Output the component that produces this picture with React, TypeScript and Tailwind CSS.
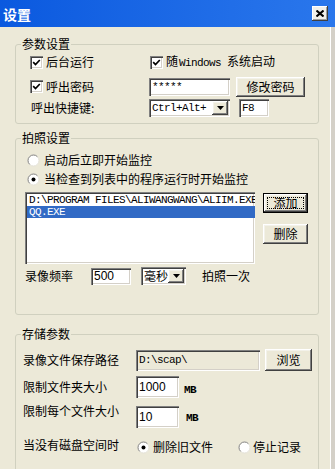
import React from "react";

const raised =
  "bg-[#ece9d8] shadow-[inset_-1px_-1px_0_#404040,inset_1px_1px_0_#ffffff,inset_-2px_-2px_0_#808080,inset_2px_2px_0_#f3f2ea]";
const sunken =
  "bg-white shadow-[inset_1px_1px_0_#808080,inset_2px_2px_0_#404040,inset_-1px_-1px_0_#ffffff,inset_-2px_-2px_0_#d4d0c8]";
const sunkenGray =
  "bg-[#ece9d8] shadow-[inset_1px_1px_0_#808080,inset_2px_2px_0_#404040,inset_-1px_-1px_0_#ffffff,inset_-2px_-2px_0_#d4d0c8]";
const mono = "font-['Liberation_Mono',monospace] text-[11px] tracking-[-0.6px]";
const digits = "font-['Liberation_Sans',Arial,sans-serif] text-[12px]";

function Check() {
  return (
    <span className={`w-[13px] h-[13px] shrink-0 flex items-center justify-center ${sunken}`}>
      <svg width="9" height="9" viewBox="0 0 9 9">
        <path d="M1.2 4.2 L3.5 6.6 L7.8 2" stroke="#000" strokeWidth="1.7" fill="none" />
      </svg>
    </span>
  );
}

function Radio({ on }: { on?: boolean }) {
  return (
    <svg width="13" height="13" viewBox="0 0 13 13" className="shrink-0">
      <circle cx="6.5" cy="6.5" r="5.5" fill="#fff" stroke="#e4e2d8" strokeWidth="1" />
      <path d="M2.61 10.39 A5.5 5.5 0 0 1 10.39 2.61" stroke="#8a8a8a" strokeWidth="1" fill="none" />
      {on && <circle cx="6.5" cy="6.5" r="2" fill="#000" />}
    </svg>
  );
}

function Arrow() {
  return (
    <div className={`w-[16px] self-stretch shrink-0 flex items-center justify-center ${raised}`}>
      <svg width="7" height="4" viewBox="0 0 7 4">
        <path d="M0 0H7L3.5 4Z" fill="#000" />
      </svg>
    </div>
  );
}

function Legend({ children }: { children: React.ReactNode }) {
  return <legend className="ml-[5px] px-[1px] leading-[16px]">{children}</legend>;
}

export default function App() {
  return (
    <div className="w-[335px] h-[469px] overflow-hidden bg-[#ece9d8] flex flex-col font-['Noto_Sans_CJK_SC','Noto_Sans',sans-serif] text-[12px] leading-[16px] text-black">
      {/* title bar */}
      <div className="h-[27px] shrink-0 flex items-center justify-between bg-gradient-to-r from-[#0a59df] to-[#2a77ec] pl-[3px] pr-[7px]">
        <span className="text-white font-bold text-[14px] leading-[18px]">设置</span>
        <div className="w-[16px] h-[15px] flex items-center justify-center bg-[#f1f0ea] shadow-[inset_-1px_-1px_0_#404040,inset_1px_1px_0_#ffffff,inset_-2px_-2px_0_#a0a0a0]">
          <svg width="8" height="7" viewBox="0 0 8 7">
            <path d="M0.5 0.5 L7.5 6.5 M7.5 0.5 L0.5 6.5" stroke="#000" strokeWidth="2" />
          </svg>
        </div>
      </div>

      <div className="flex flex-1">
        <div className="w-[330px] flex flex-col">
          {/* 参数设置 */}
          <fieldset className="border border-[#d0d0bf] rounded-[3px] w-[304px] ml-[15px] mt-[9px] pb-[6px]">
            <Legend>参数设置</Legend>
            <div className="pl-[14px] flex flex-col">
              <div className="flex h-[16px] mt-[2px] items-center">
                <div className="w-[119px] flex items-center gap-[3px]">
                  <Check />
                  <span>后台运行</span>
                </div>
                <div className="flex items-center gap-[3px] pl-[1px]">
                  <Check />
                  <span className="whitespace-nowrap">
                    随<span className={`${mono} pl-[1px]`}>Windows&nbsp;</span>系统启动
                  </span>
                </div>
              </div>
              <div className="flex h-[21px] mt-[6px] items-center">
                <div className="w-[119px] flex items-center gap-[3px]">
                  <Check />
                  <span>呼出密码</span>
                </div>
                <div className={`w-[81px] h-[18px] flex items-center pl-[3px] ${sunken} ${mono}`}>*****</div>
                <button className={`ml-[6px] w-[69px] h-[20px] flex items-center justify-center ${raised}`}>修改密码</button>
              </div>
              <div className="flex h-[18px] mt-[2px] items-center">
                <div className="w-[119px] pl-[1px]">呼出快捷键:</div>
                <div className={`w-[81px] h-[18px] flex p-[2px] ${sunken}`}>
                  <span className={`flex-1 flex items-center pl-[1px] ${mono}`}>Ctrl+Alt+</span>
                  <Arrow />
                </div>
                <div className={`ml-[9px] w-[30px] h-[18px] flex items-center pl-[3px] ${sunken} ${mono}`}>F8</div>
              </div>
            </div>
          </fieldset>

          {/* 拍照设置 */}
          <fieldset className="border border-[#d0d0bf] rounded-[3px] w-[304px] ml-[15px] mt-[6px] pb-[29px]">
            <Legend>拍照设置</Legend>
            <div className="pl-[9px] flex flex-col">
              <div className="flex items-center gap-[4px] h-[16px] mt-[6px] ml-[2px]">
                <Radio />
                <span>启动后立即开始监控</span>
              </div>
              <div className="flex items-center gap-[4px] h-[16px] mt-[3px] ml-[2px]">
                <Radio on />
                <span>当检查到列表中的程序运行时开始监控</span>
              </div>
              <div className="flex mt-[5px]">
                <div className={`w-[230px] h-[72px] overflow-hidden pt-[2px] pl-[2px] ${sunken}`}>
                  <div className={`h-[12px] leading-[12px] whitespace-nowrap pl-[2px] ${mono}`}>
                    D:\PROGRAM FILES\ALIWANGWANG\ALIIM.EXE
                  </div>
                  <div className={`h-[12px] leading-[12px] whitespace-nowrap pl-[2px] bg-[#316ac5] text-white ${mono}`}>
                    QQ.EXE
                  </div>
                </div>
                <div className="flex flex-col ml-[8px] pt-[1px] gap-[11px]">
                  <button className={`w-[45px] h-[20px] flex p-[3px] border border-black ${raised}`}>
                    <span className="flex-1 flex items-center justify-center border border-dotted border-black">添加</span>
                  </button>
                  <button className={`w-[45px] h-[20px] flex items-center justify-center ${raised}`}>删除</button>
                </div>
              </div>
              <div className="flex items-center h-[18px] mt-[3px]">
                <span className="w-[66px]">录像频率</span>
                <div className={`w-[40px] h-[17px] flex items-center pl-[3px] ${sunken} ${digits}`}>500</div>
                <div className={`ml-[10px] w-[45px] h-[18px] flex p-[2px] ${sunken}`}>
                  <span className="flex-1 flex items-center pl-[1px]">毫秒</span>
                  <Arrow />
                </div>
                <span className="ml-[16px]">拍照一次</span>
              </div>
            </div>
          </fieldset>

          {/* 存储参数 */}
          <fieldset className="border border-[#d0d0bf] rounded-[3px] w-[304px] ml-[15px] mt-[11px] h-[170px] shrink-0">
            <Legend>存储参数</Legend>
            <div className="pl-[7px] flex flex-col">
              <div className="flex items-center h-[22px] mt-[7px]">
                <span className="w-[113px]">录像文件保存路径</span>
                <div className={`w-[124px] h-[21px] flex items-center pl-[3px] ${sunkenGray} ${mono}`}>D:\scap\</div>
                <button className={`ml-[5px] w-[47px] h-[22px] flex items-center justify-center ${raised}`}>浏览</button>
              </div>
              <div className="flex items-center h-[22px] mt-[5px]">
                <span className="w-[113px]">限制文件夹大小</span>
                <div className={`w-[43px] h-[22px] flex items-center pl-[3px] ${sunken} ${digits}`}>1000</div>
                <span className={`ml-[5px] mt-[6px] font-bold ${mono}`}>MB</span>
              </div>
              <div className="flex items-start h-[22px] mt-[8px]">
                <span className="w-[113px] -mt-[3px]">限制每个文件大小</span>
                <div className={`w-[43px] h-[22px] flex items-center pl-[3px] ${sunken} ${digits}`}>10</div>
                <span className={`ml-[7px] mt-[4px] font-bold ${mono}`}>MB</span>
              </div>
              <div className="flex items-center h-[18px] mt-[10px]">
                <span className="w-[114px] -mt-[4px]">当没有磁盘空间时</span>
                <div className="flex items-center gap-[3px]">
                  <Radio on />
                  <span>删除旧文件</span>
                </div>
                <div className="flex items-center gap-[2px] ml-[25px]">
                  <Radio />
                  <span>停止记录</span>
                </div>
              </div>
            </div>
          </fieldset>
        </div>
        <div className="w-[5px] border-l border-white bg-[#d4d0c8]" />
      </div>
    </div>
  );
}
